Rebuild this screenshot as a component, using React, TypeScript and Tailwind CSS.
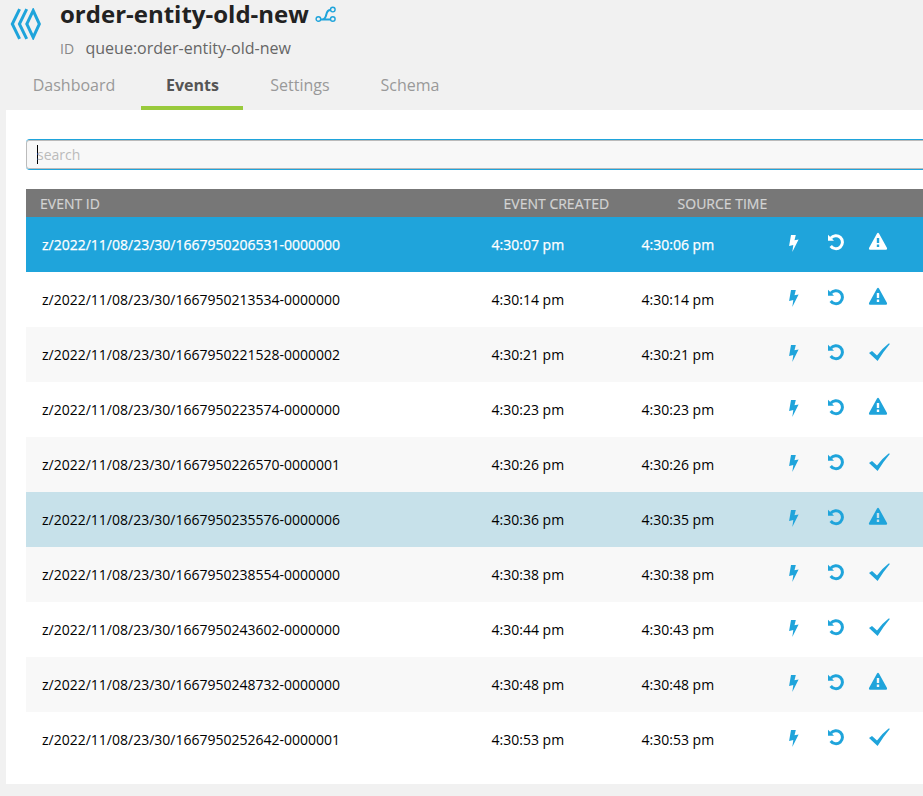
const font = "font-['Open_Sans','Noto_Sans',sans-serif]";

type Kind = 'warn' | 'ok';
type Tone = 'selected' | 'hover' | 'plain' | 'alt';

const rows: { id: string; created: string; source: string; kind: Kind; tone: Tone }[] = [
  { id: 'z/2022/11/08/23/30/1667950206531-0000000', created: '4:30:07 pm', source: '4:30:06 pm', kind: 'warn', tone: 'selected' },
  { id: 'z/2022/11/08/23/30/1667950213534-0000000', created: '4:30:14 pm', source: '4:30:14 pm', kind: 'warn', tone: 'plain' },
  { id: 'z/2022/11/08/23/30/1667950221528-0000002', created: '4:30:21 pm', source: '4:30:21 pm', kind: 'ok', tone: 'alt' },
  { id: 'z/2022/11/08/23/30/1667950223574-0000000', created: '4:30:23 pm', source: '4:30:23 pm', kind: 'warn', tone: 'plain' },
  { id: 'z/2022/11/08/23/30/1667950226570-0000001', created: '4:30:26 pm', source: '4:30:26 pm', kind: 'ok', tone: 'alt' },
  { id: 'z/2022/11/08/23/30/1667950235576-0000006', created: '4:30:36 pm', source: '4:30:35 pm', kind: 'warn', tone: 'hover' },
  { id: 'z/2022/11/08/23/30/1667950238554-0000000', created: '4:30:38 pm', source: '4:30:38 pm', kind: 'ok', tone: 'alt' },
  { id: 'z/2022/11/08/23/30/1667950243602-0000000', created: '4:30:44 pm', source: '4:30:43 pm', kind: 'ok', tone: 'plain' },
  { id: 'z/2022/11/08/23/30/1667950248732-0000000', created: '4:30:48 pm', source: '4:30:48 pm', kind: 'warn', tone: 'alt' },
  { id: 'z/2022/11/08/23/30/1667950252642-0000001', created: '4:30:53 pm', source: '4:30:53 pm', kind: 'ok', tone: 'plain' },
];

const toneClass: Record<Tone, string> = {
  selected: 'bg-[#1fa4db] text-white [-webkit-text-stroke:0.25px_white]',
  hover: 'bg-[#c7e1ea] text-black',
  plain: 'bg-white text-black',
  alt: 'bg-[#f8f8f8] text-black',
};

function QueueLogo() {
  return (
    <svg className="h-8 w-8 shrink-0" viewBox="0 0 32 32" fill="none" stroke="#1fa4db" strokeWidth="3">
      <path d="M10.6 1.2 3.3 16l7.3 14.8M17.7 1.2 10.4 16l7.3 14.8" />
      <path d="M24.2 2.6 17.8 16l6.4 13.4L30.4 16z" />
    </svg>
  );
}

function BranchIcon() {
  return (
    <svg className="h-5 w-6 shrink-0" viewBox="0 0 24 20" fill="none" stroke="#1fa4db" strokeWidth="1.4">
      <circle cx="3.4" cy="14" r="2.3" />
      <circle cx="17.8" cy="14" r="2.3" />
      <circle cx="17.8" cy="4.6" r="2.3" />
      <path d="M5.8 14.4h9.6M7 14.4c6.5 0 2-9.4 8.5-9.4" strokeWidth="2" />
    </svg>
  );
}

function Bolt() {
  return (
    <svg className="h-5 w-5" viewBox="0 0 20 20" fill="currentColor">
      <path d="M7 3.1h4.8L10.5 8.2l4.1-.7L8.3 19.9l1-6.8-4.2 1z" />
    </svg>
  );
}

function Undo() {
  return (
    <svg className="h-5 w-5" viewBox="0 0 20 20" fill="none" stroke="currentColor">
      <path d="M4.8 6.2A6.5 6.5 0 1 1 4.7 14" strokeWidth="3" />
      <path d="M2 2.8v6h6z" fill="currentColor" stroke="none" />
    </svg>
  );
}

function Warn() {
  return (
    <svg className="h-5 w-[22px]" viewBox="0 0 22 20" fill="currentColor" fillRule="evenodd">
      <path d="M9 1.5Q10 0 11 1.5L19 16Q19.6 17.8 18 17.8H2Q.4 17.8 1 16zM8.8 6v5h2.4v-5zM8.8 12.5v2.5h2.4v-2.5z" />
    </svg>
  );
}

function Check() {
  return (
    <svg className="h-5 w-[22px]" viewBox="0 0 22 20" fill="currentColor">
      <path d="M1 11 4 9l5 4.4Q14.5 6.2 20.6 1.5L22 1.8Q15.5 9.5 9.6 19z" />
    </svg>
  );
}

export default function App() {
  return (
    <div className={`h-[796px] w-[923px] overflow-hidden bg-[#f1f1f1] ${font}`}>
      <header className="flex h-[62px] pl-[9px]">
        <div className="pt-2">
          <QueueLogo />
        </div>
        <div className="ml-[19px]">
          <div className="flex h-[30px]">
            <h1 className="text-[24px] leading-[28px] font-bold whitespace-nowrap text-[#222]">order-entity-old-new</h1>
            <span className="ml-[6px] pt-[5px]"><BranchIcon /></span>
          </div>
          <div className="flex h-9 items-center text-[#666]">
            <span className="w-[25.5px] text-[14px] text-[#888]">ID</span>
            <span className="text-[16px]">queue:order-entity-old-new</span>
          </div>
        </div>
      </header>
      <nav className="flex h-12 pl-[7px] text-[16px] leading-[46px] text-[#999]">
        <span className="w-[134px] text-center">Dashboard</span>
        <span className="h-12 w-[102px] border-b-4 border-[#99ca3c] pl-px text-center font-bold text-[#555]">Events</span>
        <span className="w-[113px] pl-px text-center">Settings</span>
        <span className="w-[107px] pl-px text-center">Schema</span>
      </nav>
      <main className="ml-[6px] h-[674px] bg-white pt-[29px] pl-5">
        <div className="h-[31px] w-[920px] rounded-[4px] border-y border-[#1fa4db]">
          <div className="flex h-full items-center rounded-[3px] border border-[#bbb] bg-[#f8f8f8] pl-[10px]">
            <span className="h-[19px] w-px bg-black" />
            <span className="-ml-px text-[14px] text-[#bbb]">search</span>
          </div>
        </div>
        <div className="mt-[19px] flex h-7 items-center bg-[#777] pl-[14px] text-[14px] text-[#d3d3d3] [-webkit-text-stroke:0.2px_#d3d3d3]">
          <span className="w-[463.6px]">EVENT ID</span>
          <span className="w-[174px]">EVENT CREATED</span>
          <span>SOURCE TIME</span>
        </div>
        {rows.map((r) => (
          <div key={r.id} className={`flex h-[55px] items-center pl-4 text-[14px] ${toneClass[r.tone]}`}>
            <span className="w-[449.6px]">{r.id}</span>
            <span className="w-[150px]">{r.created}</span>
            <span className="w-[142.4px]">{r.source}</span>
            <span className={`flex pb-[5px] ${r.tone === 'selected' ? 'text-white' : 'text-[#1fa4db]'}`}>
              <span className="w-[42px]"><Bolt /></span>
              <span className="w-[42px]"><Undo /></span>
              {r.kind === 'ok' ? <Check /> : <Warn />}
            </span>
          </div>
        ))}
      </main>
    </div>
  );
}
